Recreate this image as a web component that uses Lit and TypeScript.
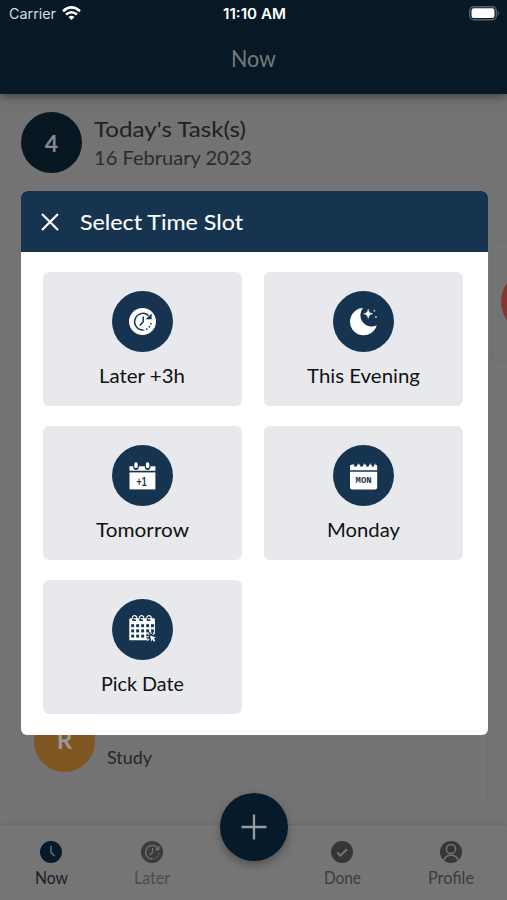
import { LitElement, html, svg, css } from "lit";
import { customElement } from "lit/decorators.js";

/* A single line of text spread over a fixed advance width. */
const line = (text: string, width: number, cls: string, height = 28, base = 21) => html`
  <svg class="line ${cls}" width=${width} height=${height}>
    <text x="0" y=${base} textLength=${width} lengthAdjust="spacingAndGlyphs">${text}</text>
  </svg>`;

const laterGlyph = (ink: string, paper: string) => svg`
  <circle cx="13.5" cy="13.5" r="13.5" fill=${paper}/>
  <g fill="none" stroke=${ink} stroke-width="1.5">
    <path d="M14 22a8.3 8.3 0 1 1 5.6-14.4"/>
    <path d="M22 15a8.6 8.6 0 0 1-7.6 7.2" stroke-dasharray="1.5 1.9"/>
    <path d="M14.2 8.6v5.2l-3.4 3.6"/>
  </g>
  <path d="M22.6 5.4v5.8h-6z" fill=${ink}/>`;

const icons = {
  later: svg`${laterGlyph("#16344f", "#fff")}`,
  evening: svg`
    <path d="M13 .1A13.6 13.6 0 1 0 26.700 17.300 11.200 11.200 0 0 1 13 .1z" fill="#fff"/>
    <path d="M18.200 1.200c.6 3 1.500 4 4.500 4.600-3 .6-3.900 1.600-4.500 4.600-.6-3-1.500-4-4.500-4.600 3-.6 3.900-1.600 4.500-4.600z" fill="#fff" stroke="#fff" stroke-width=".5"/>
    <circle cx="24.300" cy="2.700" r="1" fill="#aebdca"/><circle cx="25.900" cy="9" r="1.100" fill="#aebdca"/>`,
  tomorrow: svg`
    <path d="M.5 8.700V4.300h3.700v.8a2.800 2.800 0 0 0 5.600 0v-.8h6v.8a2.800 2.800 0 0 0 5.600 0v-.8h5v4.400z" fill="#fff"/>
    <rect x="5.300" y=".3" width="3.400" height="5.800" rx="1.600" fill="#fff"/>
    <rect x="16.900" y=".3" width="3.400" height="5.800" rx="1.600" fill="#fff"/>
    <path d="M.5 10.400h25.900v17H.5z" fill="#fff"/>
    <text class="plus" x="7.600" y="23.600" textLength="10" lengthAdjust="spacingAndGlyphs">+1</text>`,
  monday: svg`
    <path d="M0 8.200V4.800Q0 2.500 2.300 2.500H4.200C3.500 5.100 6.400 5.600 7 3.800L8.500.3 8.200 2.500h2C9.500 5.100 12.400 5.600 13 3.800L14.500.3 14.200 2.500h2C15.500 5.100 18.400 5.600 19 3.800L20.500.3 20.200 2.500h1.400C21 5 23.400 5.500 24 3.800L25.400.5 25.100 2.500Q27.200 2.600 27.200 4.800V8.200z" fill="#fff"/>
    <path d="M0 9.700h27.200v15.600q0 2.300-2.300 2.300H2.300Q0 27.600 0 25.300z" fill="#fff"/>
    <text class="mon" x="5.600" y="21.300" textLength="16" lengthAdjust="spacingAndGlyphs">MON</text>`,
  pick: svg`
    <path d="M.3 6V3.500q0-1.300 1.300-1.300h23q1.300 0 1.300 1.300V6z" fill="#fff"/>
    <g fill="none" stroke="#fff" stroke-width="1.100">
      ${[6, 13, 20.5].map((x) => svg`<path stroke="#16344f" stroke-width="1.400" d="M${x - 2} 2v2.200h3"/><path d="M${x - 2.6} 2.600a2.300 2.300 0 1 1 3.600 1.200"/>`)}
    </g>
    <path d="M.3 6h25.600v18.200H.3z" fill="#fff"/>
    <g fill="#16344f">
      ${[8.2, 13.4, 18.6].map((y) => [2.2, 7.2, 12.2, 17.2, 22].map((x) => svg`<rect x=${x} y=${y} width="2.900" height="3"/>`))}
      <circle cx="22" cy="20.500" r="4.600"/>
    </g>
    <g stroke="#d5dde4" stroke-width="1.300"><path d="M16.800 20.600h3M22 15.400v2.600M18.300 16.800l2 2M25.700 16.700l-2 2M18.300 24.600l1.800-1.800"/></g>
    <path d="M21 19.500l6 2-2.500 1.100 1.800 2.100-1.300 1-1.600-2.100-1 2.200z" fill="#fff"/>`,
};

const slots = [
  { icon: icons.later, text: "Later +3h", width: 86 },
  { icon: icons.evening, text: "This Evening", width: 113 },
  { icon: icons.tomorrow, text: "Tomorrow", width: 93 },
  { icon: icons.monday, text: "Monday", width: 73 },
  { icon: icons.pick, text: "Pick Date", width: 83 },
];

const navIcons = {
  now: svg`<circle cx="11" cy="11" r="11" fill="#071a29"/><path d="M11 4.800V11.500L14.500 15" fill="none" stroke="#777" stroke-width="1.300"/>`,
  later: svg`<g transform="scale(.815)">${laterGlyph("#747474", "#3b3b3b")}</g>`,
  done: svg`<circle cx="11" cy="11" r="11" fill="#363636"/><path d="M6.200 11.400l3.200 3.200L16 8.300" fill="none" stroke="#777" stroke-width="2"/>`,
  profile: svg`<circle cx="11" cy="11" r="11" fill="#363636"/><g fill="none" stroke="#757575" stroke-width="1.500"><circle cx="11" cy="8" r="4.600"/><path d="M3.800 19.200a7.700 7.700 0 0 1 14.400 0"/></g>`,
};

@customElement("app-root")
export class AppRoot extends LitElement {
  static styles = css`
    :host { display: block; position: relative; width: 507px; height: 900px; overflow: hidden; background: #737373;
      font-family: Lato, "Open Sans", sans-serif; }
    * { box-sizing: border-box; }
    svg { display: block; overflow: visible; flex: none; }
    .screen { height: 900px; display: flex; flex-direction: column; }
    .top { height: 94px; flex: none; background: #081824; box-shadow: 0 2px 10px rgba(0,0,0,.5); }
    .status { height: 28px; display: grid; grid-template-columns: 1fr 64px 1fr; align-items: center; padding: 0 7px 0 9px; font-family: Inter, sans-serif; }
    .carrier { display: flex; gap: 6px; align-items: center; }
    .carrier .line { fill: #d8dde0; font-size: 14px; }
    .carrier .wifi { margin-top: -2px; }
    .clock { fill: #fff; font-size: 14px; font-weight: 600; }
    .battery { justify-self: end; margin-top: -2px; }
    .title { display: flex; justify-content: center; padding-top: 18px; }
    .now { fill: #747a7e; font-size: 23px; }
    .tasks { display: flex; padding: 18px 21px 0; gap: 12px; height: 97px; flex: none; }
    .badge { width: 61px; height: 61px; border-radius: 50%; background: #071722; color: #848b90; font-size: 23px; font-weight: 700; display: grid; place-items: center; flex: none; }
    .heading { padding-top: 4px; }
    .today { fill: #202020; font-size: 22px; }
    .date { fill: #2b2b2b; font-size: 20px; }
    .list { position: relative; flex: none; height: 634px; }
    .study { position: absolute; left: 21px; top: 440px; width: 467px; height: 171px; border: 1px solid #6f6f6f; border-radius: 5px; display: flex; gap: 12px; padding: 79px 0 0 12px; }
    .avatar { width: 61px; height: 61px; border-radius: 50%; background: #7f5622; color: #999; display: grid; place-items: center; font-size: 24px; font-weight: 700; padding-bottom: 4px; }
    .studytext { fill: #262626; font-size: 18px; margin-top: 32px; }
    .peek { position: absolute; left: 492px; top: 50px; width: 40px; height: 121px; border: 1px solid #6d6d6d; border-radius: 5px; padding: 29px 0 0 8px; }
    .dot { width: 61px; height: 61px; border-radius: 50%; background: #84372a; }
    .nav { height: 75px; flex: none; position: relative; background: #757575; box-shadow: 0 -1px 3px rgba(0,0,0,.08); display: grid;
      grid-template-columns: 60px 60px 68px 60px 60px; column-gap: 0; padding-left: 21px; }
    .tab { display: flex; flex-direction: column; align-items: center; padding-top: 16px; }
    .tab.second { margin: 0 -41px 0 41px; }
    .fab { margin: -32px -79px 0 79px; width: 68px; height: 68px; border-radius: 50%; background: #071a29; box-shadow: 0 4px 8px rgba(0,0,0,.3); display: grid; place-items: center; }
    .tab.fourth { margin: 0 -103px 0 103px; }
    .tab.fifth { margin: 0 -152px 0 152px; }
    .tab .line { margin-top: 4px; fill: #3c3c3c; font-size: 16.500px; }
    .tab .laterlabel { fill: #4b4b4b; }
    .tab .nowlabel { fill: #13202a; }
    .modal { position: absolute; left: 20.500px; top: 191px; width: 467px; height: 544px; border-radius: 6px; overflow: hidden; background: #fff; }
    .modalhead { height: 61px; background: #16344f; display: flex; align-items: center; padding-left: 20px; gap: 21px; }
    .select { fill: #fff; stroke: #fff; stroke-width: .1; font-size: 22px; }
    .slots { display: grid; grid-template-columns: 199px 199px; grid-auto-rows: 134px; gap: 20px 22px; padding: 20px 0 0 22px; }
    .slot { background: #e7e9ed; border-radius: 6px; display: flex; flex-direction: column; align-items: center; padding-top: 19px; }
    .disc { width: 61px; height: 61px; border-radius: 50%; background: #16344f; display: grid; place-items: center; }
    .slot .line { fill: #111; font-size: 19.500px; margin-top: 9.500px; }
    .plus { font: 700 12px "Liberation Sans", sans-serif; fill: #16344f; }
    .mon { font: 700 9px "Liberation Mono", monospace; fill: #16344f; }
  `;

  render() {
    return html`
      <div class="screen">
        <header class="top">
          <div class="status">
            <div class="carrier">
              ${line("Carrier", 47, "", 18, 14)}
              <svg class="wifi" width="19" height="14" viewBox="0 0 19 14"><g fill="none" stroke="#fff" stroke-width="2.500"><path d="M1 5.200Q9.500-2.400 18 5.200"/><path d="M4 8.500q5.500-4.600 11 0"/></g><path d="M6.500 11q3-2.400 6 0l-3 3z" fill="#fff"/></svg>
            </div>
            ${line("11:10 AM", 63, "clock", 18, 14)}
            <svg class="battery" width="31" height="15" viewBox="0 0 31 15"><rect x=".7" y=".7" width="26.600" height="13" rx="4" fill="none" stroke="#59636b" stroke-width="1.400"/><rect x="2.500" y="2.300" width="23" height="9.800" rx="2.300" fill="#fff"/><path d="M28.800 4.700q2.600 2.500 0 5z" fill="#59636b"/></svg>
          </div>
          <div class="title">${line("Now", 45, "now")}</div>
        </header>
        <section class="tasks">
          <div class="badge">4</div>
          <div class="heading">${line("Today's Task(s)", 152, "today", 28)}${line("16 February 2023", 158, "date", 28, 20.5)}</div>
        </section>
        <section class="list">
          <div class="peek"><div class="dot"></div></div>
          <div class="study"><div class="avatar">R</div>${line("Study", 45, "studytext")}</div>
        </section>
        <nav class="nav">
          <div class="tab"><svg width="22" height="22">${navIcons.now}</svg>${line("Now", 33, "nowlabel", 22, 16.5)}</div>
          <div class="tab second"><svg width="22" height="22">${navIcons.later}</svg>${line("Later", 36, "laterlabel", 22, 16.5)}</div>
          <div class="fab"><svg width="26" height="26"><path d="M13 .5v25M.5 13h25" stroke="#969b9f" stroke-width="2.300"/></svg></div>
          <div class="tab fourth"><svg width="22" height="22">${navIcons.done}</svg>${line("Done", 37, "", 22, 16.5)}</div>
          <div class="tab fifth"><svg width="22" height="22">${navIcons.profile}</svg>${line("Profile", 46, "", 22, 16.5)}</div>
        </nav>
      </div>
      <section class="modal">
        <div class="modalhead">
          <svg width="18" height="18"><path d="M1 1l16 16M17 1L1 17" stroke="#fff" stroke-width="2.200"/></svg>
          ${line("Select Time Slot", 163, "select", 28, 22)}
        </div>
        <div class="slots">
          ${slots.map((s) => html`<div class="slot"><div class="disc"><svg width="27" height="27">${s.icon}</svg></div>${line(s.text, s.width, "", 28, 21)}</div>`)}
        </div>
      </section>`;
  }
}
